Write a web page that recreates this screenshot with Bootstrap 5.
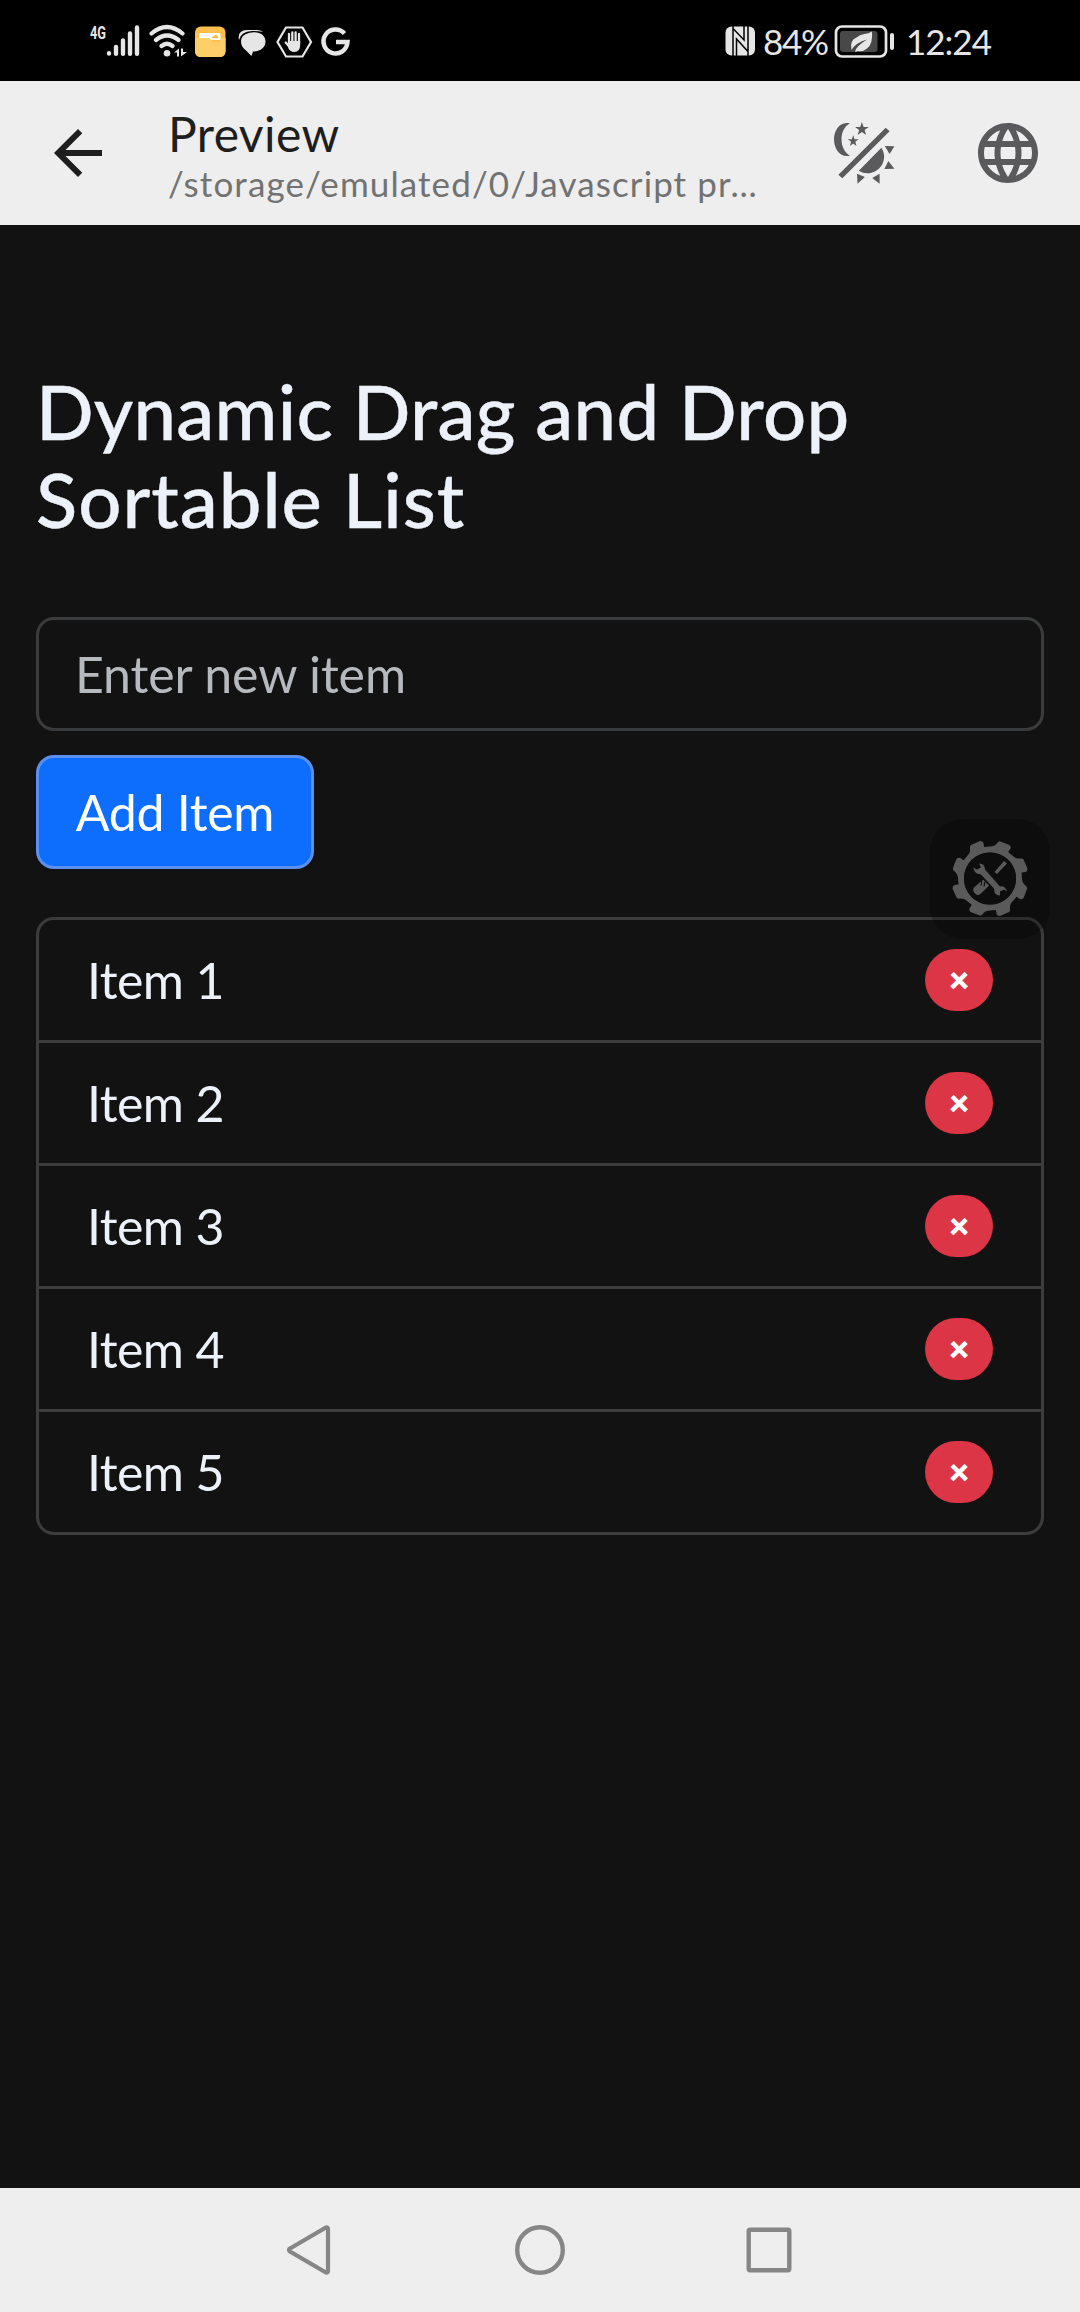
<!DOCTYPE html>
<html lang="en" data-bs-theme="dark">
<head>
<meta charset="utf-8">
<meta name="viewport" content="width=device-width, initial-scale=1">
<title>Preview</title>
<link href="https://cdn.jsdelivr.net/npm/bootstrap@5.3.0/dist/css/bootstrap.min.css" rel="stylesheet">
<style>
body{font-family:Lato,"Open Sans",sans-serif;background:#121212;color:#edf2fa;font-size:50px;height:2312px;overflow:hidden}
svg{display:block;flex:none}
.statusbar{height:81px;background:#000;color:#e6e6e6;padding-left:88px;padding-right:88px;font-size:35px}
.statusbar svg{height:40px}
.status-text{line-height:40px;white-space:nowrap}
.battery-level{width:65px;margin-left:7px;letter-spacing:-1.3px}
.battery-icon{margin-left:5px}
.clock{width:86px;margin-left:11px;letter-spacing:-1px}
.appbar{height:144px;background:#eee;color:#1e1e1e;padding-left:42px;padding-right:36px}
.app-title{font-size:48px;line-height:58px;letter-spacing:.4px}
.app-path{font-size:35px;line-height:40px;color:#727272;letter-spacing:1.1px}
.titles{width:600px;margin-left:54px;padding-top:2px}
.globe{margin-left:72px}
.page{padding:142px 36px 0}
h1{font-size:76px;line-height:88px;font-weight:500;margin-bottom:74px;color:#edf2fa;letter-spacing:.3px;-webkit-text-stroke:.4px #edf2fa}
.line-two{letter-spacing:1px}
.form-control{height:114px;border:3px solid #3a3b3c;border-radius:18px;background:#121212;font-size:50px;padding:0 36px;margin-bottom:24px;letter-spacing:-.1px}
.form-control::placeholder{color:#b6b9be;opacity:1}
.btn-primary{height:114px;border:3px solid #5b90f0;border-radius:18px;background:#0d6efd;font-size:50px;line-height:108px;padding:0;width:278px;margin-bottom:48px;white-space:nowrap;letter-spacing:-.3px}
.list-group{--bs-list-group-bg:#121212;--bs-list-group-border-color:#3c3c3d;--bs-list-group-border-width:3px;--bs-list-group-border-radius:18px;--bs-list-group-color:#edf2fa}
.list-group-item{height:123px;padding:0 48px;letter-spacing:-.6px}
.list-group-item:first-child{height:126px}
.del{width:68px;height:62px;border-radius:31px;background:#dc3545;color:#fff;font-weight:900;font-size:34px;line-height:57px;padding:0 0 3px;border:0;text-align:center;letter-spacing:0;-webkit-text-stroke:.8px #fff}
.tool-fab{position:absolute;left:930px;top:819px;width:120px;height:120px;border-radius:32px;background:rgba(0,0,0,.25);z-index:5}
.navkeys{height:124px;background:#eee;padding:0 288.500px 0 287px}
.home-key{margin-left:184px}
</style>
<script src="https://cdn.jsdelivr.net/npm/bootstrap@5.3.0/dist/js/bootstrap.bundle.min.js"></script>
</head>
<body class="d-flex flex-column position-relative">
<header class="statusbar d-flex align-items-center justify-content-between flex-shrink-0">
  <div class="d-flex">
    <svg width="56" viewBox="88 20 56 40" fill="#e6e6e6"><text x="90" y="38" font-size="18" font-weight="700" font-family="Roboto" textLength="16" lengthAdjust="spacingAndGlyphs">4G</text><g stroke="#e6e6e6" stroke-width="4.4" stroke-linecap="round"><path d="M109 52.3v.3M116 46v6.8M123 39.500v13.300M130 32.500v20.300M137 26.500v26.300"/></g></svg>
    <svg width="46" viewBox="144 20 46 40" fill="none" stroke="#e6e6e6" stroke-width="4.200" stroke-linecap="round"><path d="M151.500 32.500Q167 19.500 182.500 32.500M156 39Q167 30 178.500 39M161.500 45Q167 40.500 172.500 45"/><g fill="#e6e6e6" stroke="none"><circle cx="167" cy="52.300" r="3.300"/><path d="M174 51.500l5-4v8h-2v-4zM181 47.500h2v3.500h4l-6 4.500z"/></g></svg>
    <svg width="42" viewBox="190 20 42 40"><rect x="195" y="25.500" width="30.500" height="30.500" rx="6" fill="#fdc04f"/><path d="M199 34q0-2 2-2h17.500q2 0 2 2v5H199z" fill="#fff"/><path d="M212 37q0-2 2-2 2-2.500 3.500 0 1.500 1 .5 2.500z" fill="#f5bd48"/><path d="M195 37h13q2 0 3 2t3 2h4q2.500 0 2.500-2v-2h5v13q0 6-6 6h-18.500q-6 0-6-6V37z" fill="#fccf68"/></svg>
    <svg width="40" viewBox="232 20 40 40" fill="#e6e6e6"><path d="M239 39Q237 29.500 247 29h10q4 0 6 2-4-1-11-1-11 .5-13 9z"/><path d="M252 31.500c8-1 13.500 3 13.500 9s-5 10-12.500 10l-1.500 4.500-6-6c-3-2-4.500-5-4.500-8.500 0-5 4-8.500 11-9z"/></svg>
    <svg width="44" viewBox="272 20 44 40"><path d="M286 26.500h16.500l8.500 14.500-8.500 14.500H286L277.500 41z" fill="none" stroke="#e6e6e6" stroke-width="2.200"/><g stroke="#e6e6e6" stroke-width="2.300" stroke-linecap="round"><path d="M289 42v-9M292.300 42V31.500M295.600 42V31.500M299 42v-9M285.700 41.500l3.500 4"/></g><path d="M288 40h12.200v4q0 7-6 7-4 0-6-4z" fill="#e6e6e6"/></svg>
    <svg width="38" viewBox="316 20 38 40"><path d="M344.500 32.500A12 12 0 1 0 347.500 41H336" fill="none" stroke="#e6e6e6" stroke-width="4.500"/></svg>
  </div>
  <div class="d-flex align-items-center">
    <svg width="31" viewBox="725 20 31 40" fill="#e6e6e6"><rect x="725.500" y="25.500" width="29.500" height="29" rx="6"/><path d="M736.500 55V38L748 50.500V25M733 25v30M733 27.500L744 39V25M748 50v5" fill="none" stroke="#000" stroke-width="1.500"/></svg>
    <span class="status-text battery-level">84%</span>
    <svg class="battery-icon" width="62" viewBox="833 20 62 40"><rect x="836" y="25.500" width="50" height="30" rx="6" fill="none" stroke="#e6e6e6" stroke-width="2.700"/><rect x="840" y="30" width="37.500" height="21" rx="3" fill="#484848"/><rect x="890" y="32" width="4" height="17" rx="2" fill="#e6e6e6"/><path d="M872 30.500q1 13-5 17-4 3.500-9 2.500-2 1-3 .5 1-5 12-12-11 3-15.500 10.500-2-10 5-12.500 3-3 8-3.500 4-.5 7.500-2.500z" fill="#e6e6e6"/></svg>
    <span class="status-text clock">12:24</span>
  </div>
</header>
<nav class="appbar d-flex flex-shrink-0 align-items-center">
  <svg width="72" height="72" viewBox="0 0 24 24" fill="#1e1e1e"><path d="M20 11H7.830l5.590-5.590L12 4l-8 8 8 8 1.410-1.410L7.830 13H20v-2z"/></svg>
  <div class="titles"><div class="app-title">Preview</div><div class="app-path text-nowrap">/storage/emulated/0/Javascript pr…</div></div>
  <svg class="ms-auto" width="72" height="72" viewBox="0 0 72 72" fill="#5a5a5c"><path d="M22 6.200C11 4 6 14 6 22.300S11 41 22 38.800C17 36 13.500 30 13.500 22.300S17 9 22 6.200z"/><path d="M33.900 5l1.700 5h5.200l-4.200 3 1.600 5-4.300-3-4.300 3 1.600-5-4.200-3h5.200zM25.200 18.300l1.300 4h4.100l-3.300 2.500 1.200 4.300-3.300-2.500-3.300 2.500 1.200-4.300-3.300-2.500h4.100zM57.700 10.700l3.900 3.600-47.300 47-3.900-3.600zM53.400 30.700a16.500 16.500 0 0 1-22.600 23zM56.800 29l9.600.3-4.800 7.700zM60.300 44l6.100 7.700-10 .3zM29 56.700l7.900 3.300-7.400 6.700zM51.600 56.700v10L44.200 61z"/></svg>
  <svg class="globe" width="72" height="72" viewBox="0 0 24 24" fill="#5a5a5c"><path d="M11.990 2C6.470 2 2 6.480 2 12s4.470 10 9.990 10C17.520 22 22 17.520 22 12S17.520 2 11.990 2zm6.930 6h-2.950c-.32-1.250-.78-2.450-1.380-3.560 1.840.63 3.370 1.910 4.330 3.560zM12 4.040c.83 1.200 1.480 2.530 1.910 3.960h-3.820c.43-1.430 1.080-2.760 1.910-3.960zM4.260 14C4.100 13.360 4 12.690 4 12s.1-1.360.26-2h3.380c-.08.66-.14 1.320-.14 2 0 .68.06 1.340.14 2H4.260zm.82 2h2.950c.32 1.250.78 2.450 1.380 3.560-1.840-.63-3.370-1.900-4.330-3.560zm2.950-8H5.080c.96-1.660 2.490-2.930 4.330-3.560C8.810 5.550 8.350 6.750 8.030 8zM12 19.960c-.83-1.200-1.480-2.530-1.910-3.960h3.820c-.43 1.430-1.080 2.760-1.910 3.960zM14.340 14H9.660c-.09-.66-.16-1.320-.16-2 0-.68.07-1.350.16-2h4.680c.09.65.16 1.320.16 2 0 .68-.07 1.340-.16 2zm.25 5.560c.6-1.110 1.060-2.310 1.380-3.560h2.950c-.96 1.650-2.490 2.930-4.330 3.560zM16.360 14c.08-.66.14-1.320.14-2 0-.68-.06-1.340-.14-2h3.380c.16.64.26 1.310.26 2s-.1 1.360-.26 2h-3.380z"/></svg>
</nav>
<main class="page flex-grow-1">
  <h1>Dynamic Drag and Drop<br><span class="line-two">Sortable List</span></h1>
  <input type="text" class="form-control" placeholder="Enter new item" aria-label="New item">
  <button class="btn btn-primary">Add Item</button>
  <ul class="list-group">
    <li class="list-group-item d-flex justify-content-between align-items-center">Item 1<button class="del">×</button></li>
    <li class="list-group-item d-flex justify-content-between align-items-center">Item 2<button class="del">×</button></li>
    <li class="list-group-item d-flex justify-content-between align-items-center">Item 3<button class="del">×</button></li>
    <li class="list-group-item d-flex justify-content-between align-items-center">Item 4<button class="del">×</button></li>
    <li class="list-group-item d-flex justify-content-between align-items-center">Item 5<button class="del">×</button></li>
  </ul>
</main>
<div class="tool-fab d-flex align-items-center justify-content-center">
  <svg width="80" height="80" viewBox="-40 -39.500 80 80" fill="#5a5a5a">
    <defs><path id="tooth" d="M-4-29Q-6.500-31-6.500-35.500-7-37.500-10-37.500L-19-33.500Q-20.500-32.500-20-30-19.500-26-23-22z"/></defs>
    <circle r="29" fill="none" stroke="#5a5a5a" stroke-width="6"/>
    <use href="#tooth"/><use href="#tooth" transform="rotate(45)"/><use href="#tooth" transform="rotate(90)"/><use href="#tooth" transform="rotate(135)"/><use href="#tooth" transform="rotate(180)"/><use href="#tooth" transform="rotate(225)"/><use href="#tooth" transform="rotate(270)"/><use href="#tooth" transform="rotate(315)"/>
    <circle r="26" fill="#0d0d0d"/>
    <path d="M14-17.500l3 2.500L7-4.500 4.500-6.500zM-7 1l6 6-8 8q-3 3-6 0-3-3-1-6z"/>
    <path d="M-8 1l-1 6M-5 3l-1 5" stroke="#0d0d0d" stroke-width="1.200"/>
    <path d="M-11-15q6 0 6 6L10 8q5-1 7 5l-3-2-4 2 0 4q-6 0-6-7L-9-4q-6 0-8-7l4 2 4-2z"/>
  </svg>
</div>
<footer class="navkeys d-flex align-items-center justify-content-between flex-shrink-0">
  <svg width="44" height="52" viewBox="0 0 44 52"><path d="M3 24.500L39 3.500q2-.5 2 1.500v42q0 2-2 1.500L3 27.500q-2-1.500 0-3z" fill="none" stroke="#868686" stroke-width="4.200"/></svg>
  <svg class="home-key me-auto" width="50" height="50" viewBox="0 0 50 50"><circle cx="25" cy="25" r="22.800" fill="none" stroke="#868686" stroke-width="4.400"/></svg>
  <svg width="46" height="46" viewBox="0 0 46 46"><rect x="2.700" y="2.700" width="40.600" height="40.600" rx="1.500" fill="none" stroke="#868686" stroke-width="4.400"/></svg>
</footer>
</body>
</html>
